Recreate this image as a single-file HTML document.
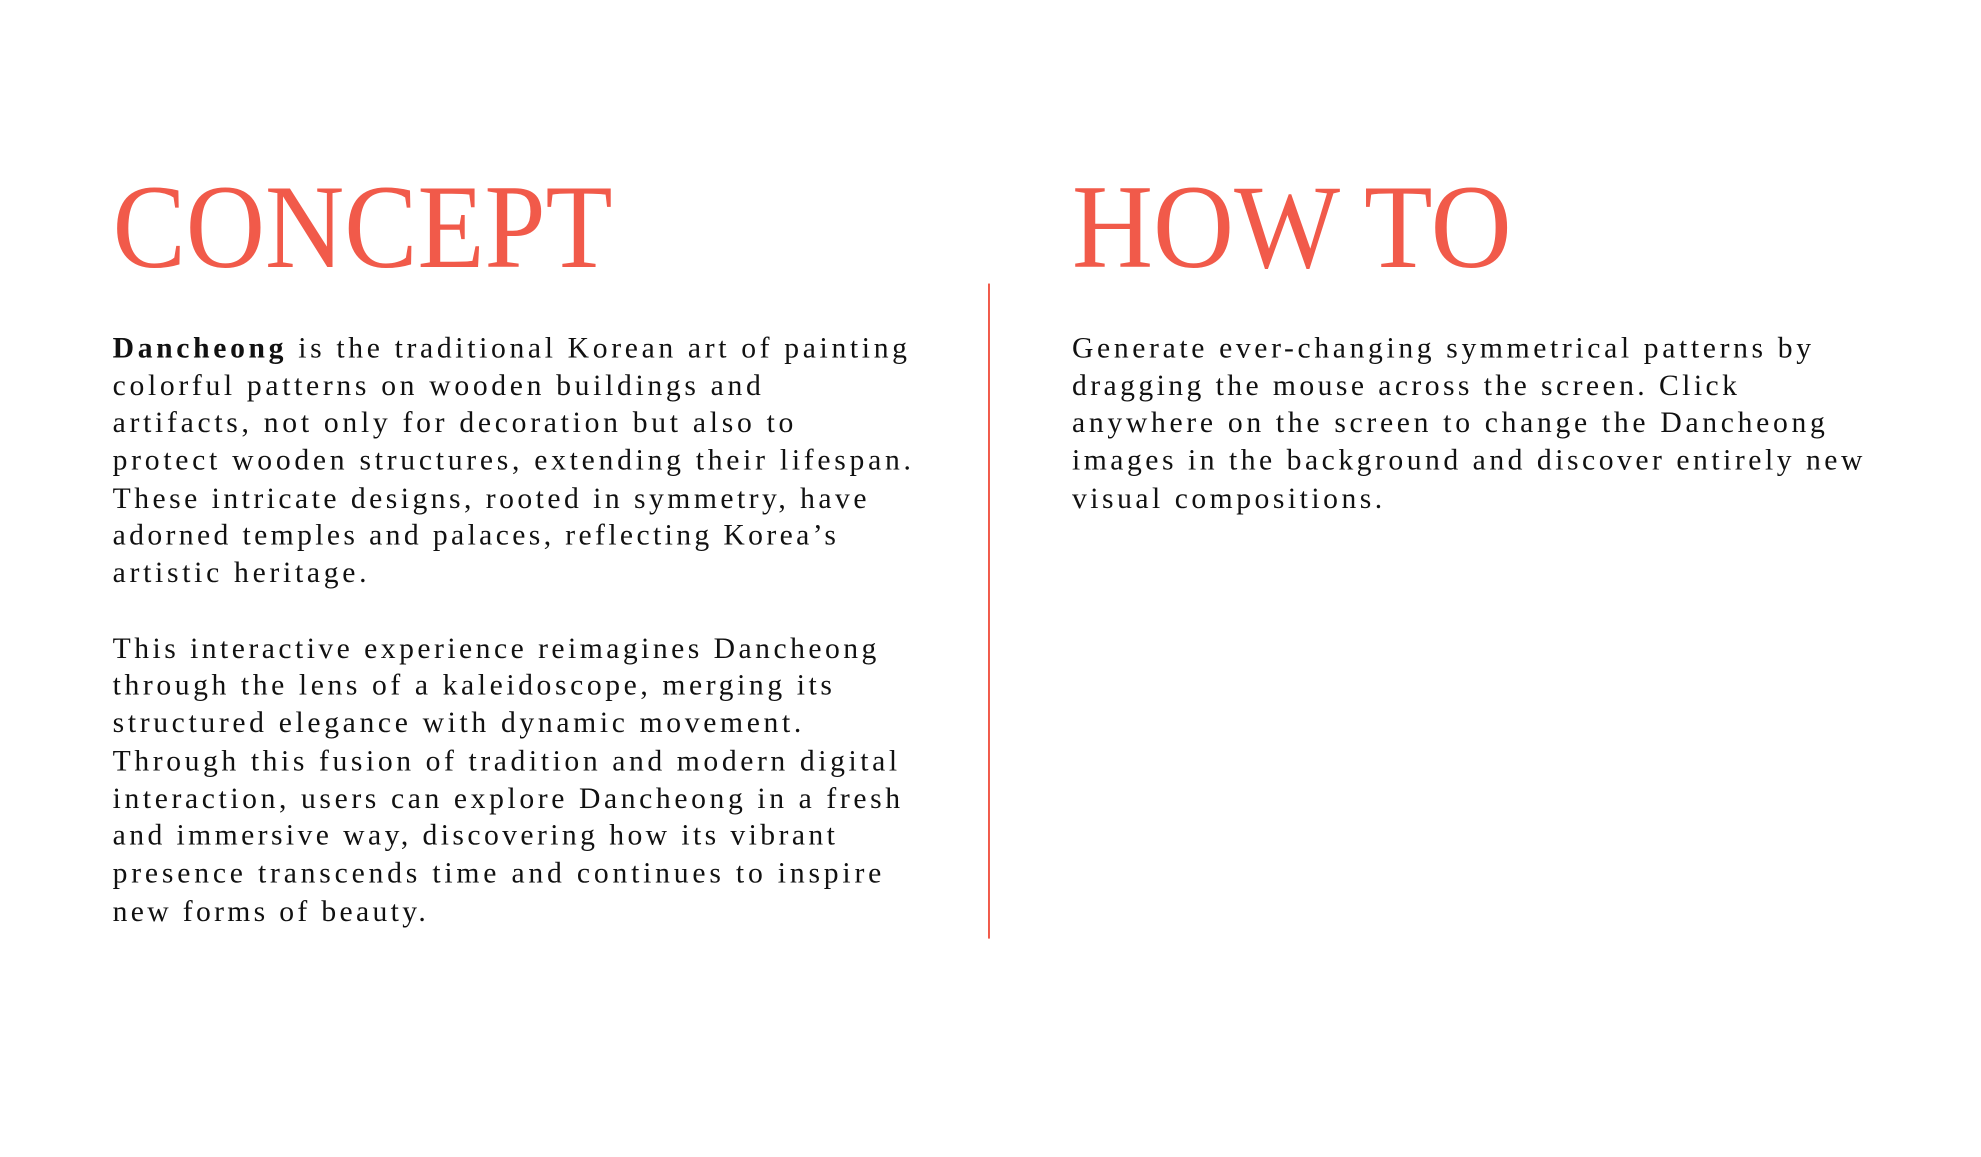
<!DOCTYPE html>
<html><head><meta charset="utf-8"><style>
html,body{margin:0;padding:0;background:#fff;width:1981px;height:1157px;overflow:hidden}
svg{display:block}
.h{font-family:"Liberation Serif",serif;font-size:121px;fill:#f15a4a}
.b{font-family:"Liberation Serif",serif;font-size:30px;fill:#111}
</style></head><body>
<svg width="1981" height="1157" viewBox="0 0 1981 1157" xmlns="http://www.w3.org/2000/svg">
<g transform="scale(0.988)">
<text class="h" x="114" y="270" textLength="506" lengthAdjust="spacingAndGlyphs">CONCEPT</text>
<text class="h" x="1085" y="270" textLength="445" lengthAdjust="spacingAndGlyphs">HOW TO</text>
<rect x="1000" y="287" width="2" height="663" fill="#f15a4a"/>
<g class="b">
<text x="114" y="362" textLength="804" lengthAdjust="spacing"><tspan font-weight="bold">Dancheong</tspan> is the traditional Korean art of painting</text>
<text x="114" y="400" textLength="656" lengthAdjust="spacing">colorful patterns on wooden buildings and</text>
<text x="114" y="437" textLength="689" lengthAdjust="spacing">artifacts, not only for decoration but also to</text>
<text x="114" y="475" textLength="808" lengthAdjust="spacing">protect wooden structures, extending their lifespan.</text>
<text x="114" y="514" textLength="763" lengthAdjust="spacing">These intricate designs, rooted in symmetry, have</text>
<text x="114" y="551" textLength="732" lengthAdjust="spacing">adorned temples and palaces, reflecting Korea’s</text>
<text x="114" y="589" textLength="257" lengthAdjust="spacing">artistic heritage.</text>
<text x="114" y="666" textLength="773" lengthAdjust="spacing">This interactive experience reimagines Dancheong</text>
<text x="114" y="703" textLength="728" lengthAdjust="spacing">through the lens of a kaleidoscope, merging its</text>
<text x="114" y="741" textLength="697" lengthAdjust="spacing">structured elegance with dynamic movement.</text>
<text x="114" y="780" textLength="794" lengthAdjust="spacing">Through this fusion of tradition and modern digital</text>
<text x="114" y="818" textLength="797" lengthAdjust="spacing">interaction, users can explore Dancheong in a fresh</text>
<text x="114" y="855" textLength="731" lengthAdjust="spacing">and immersive way, discovering how its vibrant</text>
<text x="114" y="893" textLength="778" lengthAdjust="spacing">presence transcends time and continues to inspire</text>
<text x="114" y="932" textLength="317" lengthAdjust="spacing">new forms of beauty.</text>
<text x="1085" y="362" textLength="748" lengthAdjust="spacing">Generate ever-changing symmetrical patterns by</text>
<text x="1085" y="400" textLength="673" lengthAdjust="spacing">dragging the mouse across the screen. Click</text>
<text x="1085" y="437" textLength="762" lengthAdjust="spacing">anywhere on the screen to change the Dancheong</text>
<text x="1085" y="475" textLength="800" lengthAdjust="spacing">images in the background and discover entirely new</text>
<text x="1085" y="514" textLength="314" lengthAdjust="spacing">visual compositions.</text>
</g>
</g>
</svg>
</body></html>
